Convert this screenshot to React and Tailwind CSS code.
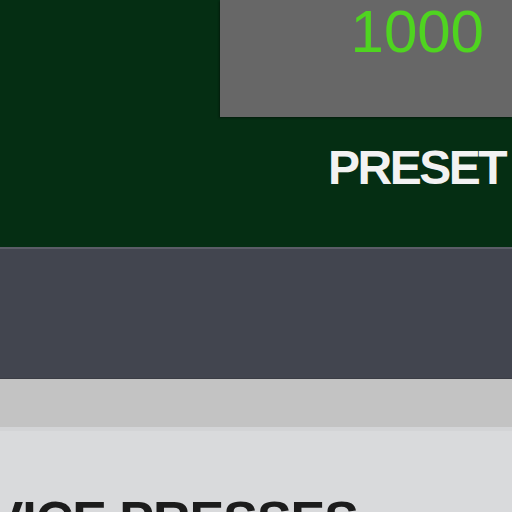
export default function App() {
  return (
    <div className="w-full h-[512px] overflow-hidden flex flex-col font-['Liberation_Sans',Arial,sans-serif]">
      {/* display panel */}
      <div className="h-[247px] bg-[#052e13] flex flex-col shrink-0">
        <div className="flex">
          <div className="w-[220px] shrink-0" />
          <div className="flex-1 h-[117px] bg-[#676767] flex justify-end items-start pr-[28px] shadow-[-1px_1px_2px_rgba(0,0,0,0.4)]">
            <span className="text-[60px] leading-[64px] text-[#4fd420]">1000</span>
          </div>
        </div>
        <div className="flex justify-end mt-[27px] pr-[7px]">
          <span className="text-[48px] leading-none font-bold tracking-[-2.5px] text-[#f2f2f2]">PRESET</span>
        </div>
      </div>

      {/* dark band */}
      <div className="h-[132px] shrink-0 bg-[#42454f] border-t-2 border-[#5b5d67] border-b border-b-[#3a3c44]" />

      {/* light strip */}
      <div className="h-[52px] shrink-0 bg-[#c3c3c3] border-b-4 border-[#d3d4d6]" />

      {/* bottom label */}
      <div className="flex-1 bg-[#d9dadc] pt-[63px] overflow-hidden">
        <div className="w-[358px] flex justify-end overflow-hidden">
          <span className="text-[52px] leading-none font-bold whitespace-nowrap text-[#1c1c1c] tracking-[-1px]">DEVICE PRESSES</span>
        </div>
      </div>
    </div>
  );
}
